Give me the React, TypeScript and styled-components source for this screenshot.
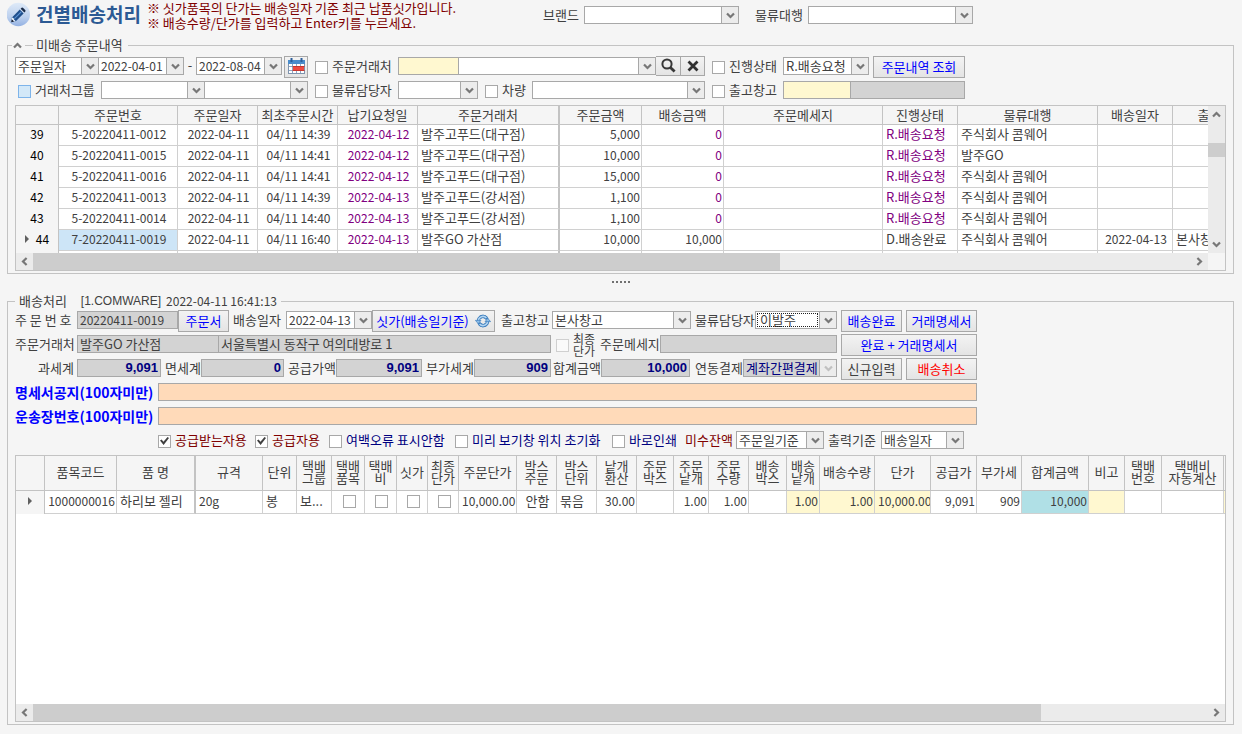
import React from 'react';
import styled, { createGlobalStyle, css } from 'styled-components';

const KR = '"Noto Sans CJK KR", sans-serif';
const LATIN = '"Liberation Sans", "Noto Sans CJK KR", sans-serif';

const color = {
  page: '#f5f5f5',
  text: '#404040',
  line: '#c3c3c3',
  cellLine: '#d0d0d0',
  field: '#a8a8a8',
  grey: '#d3d3d3',
  yellow: '#fff8d0',
  peach: '#ffdab9',
  blue: '#0000ff',
  navy: '#000080',
  maroon: '#800000',
  purple: '#800080',
  red: '#ff0000',
};

const GlobalStyle = createGlobalStyle`
  *, *::before, *::after { box-sizing: border-box; }
  body {
    margin: 0;
    background: ${color.page};
    color: ${color.text};
    font: 13px/16px ${KR};
  }
  button, input, select { font: inherit; color: inherit; margin: 0; }
`;

const Page = styled.main`
  display: flex;
  flex-direction: column;
  min-height: 100vh;
  padding: 0 8px 9px 7px;
`;

const Header = styled.header`
  display: flex;
  align-items: flex-start;
  height: 37px;
  white-space: nowrap;
`;

const TitleBlock = styled.div`
  display: flex;
  width: 536px;
`;

const Title = styled.h1`
  margin: 0 6px 0 5px;
  font-size: 19px;
  line-height: 28px;
  font-weight: 700;
  color: #2c5a94;
`;

const Notes = styled.p`
  margin: 0;
  line-height: 15px;
  color: ${color.maroon};
`;

const HeaderFields = styled.div`
  display: flex;
  align-items: flex-start;
  padding-top: 5px;
`;

const Group = styled.fieldset<{ $fill?: boolean }>`
  min-width: 0;
  margin: 0;
  padding: ${p => (p.$fill ? 1 : 3)}px 7px 2px;
  border: 1px solid ${color.line};
`;

const Legend = styled.legend`
  display: flex;
  align-items: center;
  height: 16px;
  padding: 0 4px;
  line-height: 14px;
  white-space: nowrap;
`;

const FoldLegend = styled(Legend)`
  margin-left: -3px;
  padding: 0 5px 0 1px;
`;

const FoldButton = styled.button`
  display: flex;
  padding: 0;
  border: 0;
  background: none;
`;

const LegendRule = styled.span`
  width: 8px;
  height: 1px;
  margin: 0 3px 0 3px;
  background: ${color.line};
`;

const Digits = styled.span`
  margin-left: 5px;
  font-size: 12px;
`;

const Company = styled.span`
  margin-left: 14px;
  font-family: ${LATIN};
  font-size: 12px;
`;

const Row = styled.div`
  display: flex;
  align-items: flex-start;
  height: 24px;
  white-space: nowrap;
`;

const Label = styled.label<{ $w: number; $color?: string; $end?: boolean }>`
  flex: none;
  width: ${p => p.$w}px;
  line-height: 20px;
  color: ${p => p.$color || 'inherit'};
  text-align: ${p => (p.$end ? 'right' : 'left')};
  padding-right: ${p => (p.$end ? 3 : 0)}px;
`;

const NoticeLabel = styled(Label)`
  font-size: 14px;
  font-weight: 700;
`;

const Tick = styled.label<{ $w: number; $color?: string }>`
  display: flex;
  align-items: center;
  flex: none;
  gap: 4px;
  width: ${p => p.$w}px;
  height: 22px;
  line-height: 18px;
  color: ${p => p.$color || 'inherit'};
`;

const TickText = styled.span`
  padding-bottom: 2px;
`;

const StackedText = styled.span`
  font-size: 12px;
  line-height: 12px;
`;

const Box = styled.input.attrs({ type: 'checkbox' })<{ $blue?: boolean }>`
  appearance: none;
  display: grid;
  place-items: center;
  flex: none;
  width: 13px;
  height: 13px;
  border: 1px solid ${p => (p.$blue ? '#7eb4ea' : color.field)};
  background: ${p => (p.$blue ? '#d3e8f8' : '#fff')};
  &:disabled { border-color: #d0d0d0; background: #fafafa; }
  &:checked::after {
    content: '';
    width: 9px;
    height: 8px;
    background: #404040;
    clip-path: polygon(0 45%, 18% 32%, 38% 58%, 84% 0, 100% 14%, 40% 100%);
  }
`;

const fieldBox = css<{ $w: number; $join?: boolean; $bg?: string }>`
  flex: none;
  width: ${p => p.$w}px;
  height: 18px;
  margin-top: 1px;
  border: 1px solid ${color.field};
  background: ${p => p.$bg || '#fff'};
  ${p => p.$join && css`border-left: 0;`}
`;

const TextField = styled.input.attrs({ type: 'text' })<{
  $w: number; $join?: boolean; $bg?: string; $digits?: boolean; $total?: boolean;
}>`
  ${fieldBox}
  padding: 0 2px 2px;
  outline: 0;
  ${p => p.$digits && css`font-size: 12px;`}
  ${p => p.$total && css`
    font-family: ${LATIN};
    font-weight: 700;
    text-align: right;
    color: ${color.navy};
  `}
`;

const ComboBox = styled.div<{ $w: number; $join?: boolean; $bg?: string }>`
  ${fieldBox}
  display: grid;
  grid-template-columns: minmax(0, 1fr) 17px;
`;

const ComboSelect = styled.select<{ $color?: string; $inset?: boolean }>`
  appearance: none;
  grid-area: 1 / 1 / 2 / 3;
  height: 16px;
  padding: 0 18px 1px ${p => (p.$inset ? 4 : 2)}px;
  border: 0;
  outline: 0;
  border-radius: 0;
  background: none;
  line-height: 15px;
  color: ${p => p.$color || 'inherit'};
  opacity: 1;
`;

const ComboInput = styled.input.attrs({ type: 'text' })`
  grid-area: 1 / 1;
  min-width: 0;
  height: 16px;
  padding: 0 0 1px 2px;
  border: 0;
  outline: 0;
  background: none;
  font-size: 12px;
`;

const arrowBox = css`
  grid-area: 1 / 2;
  display: flex;
  align-items: center;
  justify-content: center;
  height: 16px;
  padding: 0;
  border: 0;
  border-left: 1px solid ${color.field};
  background: #ececec;
`;

const ArrowFace = styled.span`
  ${arrowBox}
  pointer-events: none;
`;

const ArrowButton = styled.button`
  ${arrowBox}
`;

const FocusFrame = styled.span`
  grid-area: 1 / 1;
  margin: 1px;
  border: 1px dotted #202020;
  pointer-events: none;
`;

const Button = styled.button<{ $w: number; $color?: string; $short?: boolean; $join?: boolean }>`
  display: flex;
  align-items: center;
  justify-content: center;
  flex: none;
  gap: 6px;
  width: ${p => p.$w}px;
  height: ${p => (p.$short ? 20 : 22)}px;
  padding: 0 0 1px;
  border: 1px solid ${color.field};
  background: linear-gradient(#f3f3f3, #e4e4e4);
  color: ${p => p.$color || 'inherit'};
  white-space: nowrap;
  ${p => p.$join && css`border-left: 0;`}
`;

const Gap = styled.span<{ $w: number }>`
  flex: none;
  width: ${p => p.$w}px;
  line-height: 18px;
  text-align: center;
`;

const GridFrame = styled.div<{ $fill?: boolean }>`
  display: grid;
  grid-template-columns: minmax(0, 1fr) auto;
  grid-template-rows: ${p => (p.$fill ? 'max(120px, calc(100vh - 486px))' : '147px')} 17px;
  margin-top: 1px;
  border: 1px solid ${color.line};
  background: ${p => (p.$fill ? '#fff' : color.page)};
`;

const Viewport = styled.div<{ $whole?: boolean }>`
  overflow: hidden;
  ${p => p.$whole && css`grid-column: 1 / 3;`}
`;

const Table = styled.table<{ $w: number }>`
  width: ${p => p.$w}px;
  table-layout: fixed;
  border-collapse: separate;
  border-spacing: 0;
  white-space: nowrap;
`;

const Th = styled.th<{ $h: number; $frozen?: boolean }>`
  height: ${p => p.$h}px;
  padding: 0 0 ${p => (p.$h > 20 ? 2 : 1)}px;
  border: solid ${color.line};
  border-width: 0 ${p => (p.$frozen ? 2 : 1)}px 1px 0;
  background: ${color.page};
  font-weight: 400;
  line-height: ${p => (p.$h > 20 ? 12 : 16)}px;
  white-space: pre;
`;

type CellKind = { $h: number; $align?: string; $num?: boolean; $frozen?: boolean; $bg?: string; $color?: string };

const Td = styled.td<CellKind>`
  height: ${p => p.$h}px;
  padding: 0 1px 2px 3px;
  overflow: hidden;
  border: solid ${color.cellLine};
  border-width: 0 ${p => (p.$frozen ? 2 : 1)}px 1px 0;
  ${p => p.$frozen && css`border-right-color: ${color.line};`}
  background: ${p => p.$bg || '#fff'};
  color: ${p => p.$color || 'inherit'};
  text-align: ${p => p.$align || 'left'};
  ${p => p.$num && css`font-size: 12px;`}
`;

const RowHead = styled.th<{ $h: number }>`
  height: ${p => p.$h}px;
  padding: 0 0 3px;
  border-right: 1px solid ${color.line};
  background: ${color.page};
  color: #000;
  font: 12px/16px ${KR};
`;

const RowMark = styled.span`
  display: flex;
  align-items: center;
  justify-content: center;
  gap: 7px;
`;

const CellTick = styled(Box)`
  margin: 1px auto 0;
`;

const HBar = styled.div<{ $whole?: boolean }>`
  display: flex;
  ${p => p.$whole && css`grid-column: 1 / 3;`}
  background: #ebebeb;
`;

const VBar = styled.div`
  display: flex;
  flex-direction: column;
  width: 17px;
  background: #ebebeb;
`;

const Corner = styled.div`
  background: ${color.page};
`;

const Track = styled.div<{ $vertical?: boolean }>`
  display: flex;
  flex: 1;
  flex-direction: ${p => (p.$vertical ? 'column' : 'row')};
  min-height: 0;
`;

const Thumb = styled.div<{ $size: number }>`
  flex: 0 0 ${p => p.$size}%;
  background: #cdcdcd;
`;

const TrackLead = styled.div<{ $size: number }>`
  flex: 0 0 ${p => p.$size}%;
`;

const ScrollButton = styled.button`
  display: flex;
  align-items: center;
  justify-content: center;
  flex: none;
  width: 17px;
  height: 17px;
  padding: 0;
  border: 0;
  background: none;
`;

const Splitter = styled.div`
  display: flex;
  justify-content: center;
  gap: 2px;
  height: 19px;
  padding-top: 7px;
`;

const Dot = styled.span`
  width: 2px;
  height: 2px;
  background: #707070;
`;

const turns = { down: 0, left: 90, up: 180, right: 270 };

function Chevron({ dir = 'down', pale }: { dir?: keyof typeof turns; pale?: boolean }) {
  return (
    <svg width="9" height="9" viewBox="0 0 9 9" aria-hidden="true">
      <path
        d="M1 2.4 L4.5 6 L8 2.4"
        fill="none"
        stroke={pale ? '#c0c0c0' : '#777'}
        strokeWidth="2.2"
        transform={`rotate(${turns[dir]} 4.5 4.5)`}
      />
    </svg>
  );
}

function RowArrow() {
  return (
    <svg width="4" height="8" viewBox="0 0 4 8" aria-hidden="true">
      <path d="M0 0 L4 4 L0 8 Z" fill="#606060" />
    </svg>
  );
}

function PencilBadge() {
  return (
    <svg width="24" height="27" viewBox="0 0 24 27" aria-hidden="true">
      <defs>
        <linearGradient id="badge" x1="0" y1="0" x2="0" y2="1">
          <stop offset="0" stopColor="#dfeaf8" />
          <stop offset="0.6" stopColor="#bcd0ee" />
          <stop offset="1" stopColor="#93b1e2" />
        </linearGradient>
      </defs>
      <circle cx="11.3" cy="14.5" r="11.7" fill="url(#badge)" />
      <path d="M4.2 22.2 L5 17.4 L12.8 9.6 L16.6 13.4 L8.8 21.2 Z" fill="#1f4f8c" />
      <path d="M13.6 8.8 L14.6 7.8 Q15.4 7.2 16.2 7.9 L18.2 9.9 Q18.9 10.8 18.3 11.6 L17.4 12.6 Z" fill="#1a2b48" />
      <path d="M7.4 18.6 L14.2 11.8" stroke="#5d93d4" strokeWidth="1.2" />
      <path d="M4.2 22.2 L5 17.4 L6.5 18 L7.1 19.5 L8.8 21.2 Z" fill="#eef4fc" />
      <path d="M4.2 22.2 L4.8 19.2 L7.2 21.6 Z" fill="#101c30" />
    </svg>
  );
}

function CalendarIcon() {
  return (
    <svg width="17" height="17" viewBox="0 0 17 17" aria-hidden="true">
      <rect x="0.5" y="2.5" width="16" height="13" fill="#fff" stroke="#7f93ad" />
      <rect x="0" y="2" width="17" height="4" fill="#4a8ccb" />
      <path d="M3.5 0 V4 M13.5 0 V4" stroke="#2c5f9c" strokeWidth="2" />
      <path d="M1 8.5 H16 M1 12.5 H16 M4.5 6 V15 M8.5 6 V15 M12.5 6 V15" stroke="#8ea6c4" />
      <rect x="5" y="9" width="11" height="3" fill="#ee4a40" />
      <path d="M4.5 8.5 H16.5 M4.5 12.5 H16.5" stroke="#c8362e" />
    </svg>
  );
}

function SearchIcon() {
  return (
    <svg width="15" height="15" viewBox="0 0 15 15" aria-hidden="true">
      <circle cx="6" cy="6" r="4.6" fill="none" stroke="#383838" strokeWidth="2" />
      <path d="M9.4 9.4 L13.6 13.6" stroke="#383838" strokeWidth="2.8" />
    </svg>
  );
}

function CloseIcon() {
  return (
    <svg width="12" height="12" viewBox="0 0 12 12" aria-hidden="true">
      <path d="M1.5 1.5 L10.5 10.5 M10.5 1.5 L1.5 10.5" stroke="#303030" strokeWidth="2.8" />
    </svg>
  );
}

function RefreshIcon() {
  return (
    <svg width="16" height="14" viewBox="0 0 16 14" aria-hidden="true">
      <g fill="none" stroke="#3f7fbe" strokeWidth="3.2">
        <path d="M3.4 7.6 A4.6 4.6 0 0 1 11.4 4" />
        <path d="M12.6 6.4 A4.6 4.6 0 0 1 4.6 10" />
        <path d="M5 3.4 A4.8 4.8 0 0 1 12.2 5.2 M11 10.6 A4.8 4.8 0 0 1 3.8 8.8" />
      </g>
      <g fill="none" stroke="#b4d6f2" strokeWidth="1.6">
        <path d="M3.4 7.6 A4.6 4.6 0 0 1 11.4 4" />
        <path d="M12.6 6.4 A4.6 4.6 0 0 1 4.6 10" />
      </g>
      <path d="M0.4 6.4 H6 L3.2 9.6 Z M10 7.6 H15.6 L12.8 4.4 Z" fill="#8fc0ea" stroke="#3f7fbe" strokeWidth="0.7" />
    </svg>
  );
}

type SelectProps = {
  label: string; w: number; id?: string; value?: string; join?: boolean;
  bg?: string; tone?: string; disabled?: boolean; focused?: boolean;
};

function Select({ label, w, id, value = '', join, bg, tone, disabled, focused }: SelectProps) {
  return (
    <ComboBox $w={w} $join={join} $bg={bg}>
      <ComboSelect id={id} aria-label={label} defaultValue={value} disabled={disabled} $color={tone} $inset={focused}>
        <option value={value}>{value}</option>
      </ComboSelect>
      {focused && <FocusFrame />}
      <ArrowFace><Chevron pale={disabled} /></ArrowFace>
    </ComboBox>
  );
}

function DateField({ label, w, id, value, join }: SelectProps) {
  return (
    <ComboBox $w={w} $join={join}>
      <ComboInput id={id} aria-label={label} defaultValue={value} />
      <ArrowButton type="button" aria-label={`${label} 선택`}><Chevron /></ArrowButton>
    </ComboBox>
  );
}

type CheckProps = { text: string; w: number; tone?: string; blue?: boolean; on?: boolean };

function Check({ text, w, tone, blue, on }: CheckProps) {
  return (
    <Tick $w={w} $color={tone}>
      <Box $blue={blue} defaultChecked={on} />
      <TickText>{text}</TickText>
    </Tick>
  );
}

type Column = { title: string; w: number; align?: string; num?: boolean; color?: string; bg?: string; frozen?: boolean };

const orderColumns: Column[] = [
  { title: '주문번호', w: 119, align: 'center', num: true },
  { title: '주문일자', w: 80, align: 'center', num: true },
  { title: '최초주문시간', w: 80, align: 'center', num: true },
  { title: '납기요청일', w: 80, align: 'center', num: true, color: color.purple },
  { title: '주문거래처', w: 142, frozen: true },
  { title: '주문금액', w: 82, align: 'right', num: true },
  { title: '배송금액', w: 82, align: 'right', num: true },
  { title: '주문메세지', w: 159 },
  { title: '진행상태', w: 75 },
  { title: '물류대행', w: 140 },
  { title: '배송일자', w: 75, align: 'center', num: true },
  { title: '출고창고', w: 98 },
];

const orders: string[][] = [
  ['39', '5-20220411-0012', '2022-04-11', '04/11 14:39', '2022-04-12', '발주고푸드(대구점)', '5,000', '0', '', 'R.배송요청', '주식회사 콤웨어', '', ''],
  ['40', '5-20220411-0015', '2022-04-11', '04/11 14:41', '2022-04-12', '발주고푸드(대구점)', '10,000', '0', '', 'R.배송요청', '발주GO', '', ''],
  ['41', '5-20220411-0016', '2022-04-11', '04/11 14:41', '2022-04-12', '발주고푸드(대구점)', '15,000', '0', '', 'R.배송요청', '주식회사 콤웨어', '', ''],
  ['42', '5-20220411-0013', '2022-04-11', '04/11 14:39', '2022-04-13', '발주고푸드(강서점)', '1,100', '0', '', 'R.배송요청', '주식회사 콤웨어', '', ''],
  ['43', '5-20220411-0014', '2022-04-11', '04/11 14:40', '2022-04-13', '발주고푸드(강서점)', '1,100', '0', '', 'R.배송요청', '주식회사 콤웨어', '', ''],
  ['44', '7-20220411-0019', '2022-04-11', '04/11 16:40', '2022-04-13', '발주GO 가산점', '10,000', '10,000', '', 'D.배송완료', '주식회사 콤웨어', '2022-04-13', '본사창고'],
  ['', '', '', '', '', '', '', '', '', '', '', '', ''],
];

const itemColumns: (Column & { value: string | boolean })[] = [
  { title: '품목코드', w: 72, num: true, align: 'center', value: '1000000016' },
  { title: '품 명', w: 79, frozen: true, value: '하리보 젤리' },
  { title: '규격', w: 67, num: true, value: '20g' },
  { title: '단위', w: 34, value: '봉' },
  { title: '택배\n그룹', w: 35, value: '보...' },
  { title: '택배\n품목', w: 33, value: false },
  { title: '택배\n비', w: 32, value: false },
  { title: '싯가', w: 31, value: false },
  { title: '최종\n단가', w: 31, value: false },
  { title: '주문단가', w: 58, num: true, align: 'right', value: '10,000.00' },
  { title: '박스\n주문', w: 40, align: 'center', value: '안함' },
  { title: '박스\n단위', w: 40, value: '묶음' },
  { title: '낱개\n환산', w: 40, num: true, align: 'right', value: '30.00' },
  { title: '주문\n박스', w: 37, value: '' },
  { title: '주문\n낱개', w: 35, num: true, align: 'right', value: '1.00' },
  { title: '주문\n수량', w: 40, num: true, align: 'right', value: '1.00' },
  { title: '배송\n박스', w: 38, value: '' },
  { title: '배송\n낱개', w: 33, num: true, align: 'right', bg: color.yellow, value: '1.00' },
  { title: '배송수량', w: 55, num: true, align: 'right', bg: color.yellow, value: '1.00' },
  { title: '단가', w: 56, num: true, align: 'right', bg: color.yellow, value: '10,000.00' },
  { title: '공급가', w: 46, num: true, align: 'right', value: '9,091' },
  { title: '부가세', w: 45, num: true, align: 'right', value: '909' },
  { title: '합계금액', w: 67, num: true, align: 'right', bg: '#b0e0e6', value: '10,000' },
  { title: '비고', w: 36, bg: color.yellow, value: '' },
  { title: '택배\n번호', w: 37, value: '' },
  { title: '택배비\n자동계산', w: 62, value: '' },
  { title: '', w: 60, bg: color.yellow, value: '' },
];

const sum = (cols: Column[]) => cols.reduce((n, c) => n + c.w, 0);

function OrderTable() {
  return (
    <Table $w={sum(orderColumns) + 43}>
      <colgroup>
        <col width={43} />
        {orderColumns.map(c => <col key={c.title} width={c.w} />)}
      </colgroup>
      <thead>
        <tr>
          <Th $h={19} aria-label="순번" />
          {orderColumns.map(c => <Th key={c.title} $h={19} $frozen={c.frozen}>{c.title}</Th>)}
        </tr>
      </thead>
      <tbody>
        {orders.map(([no, ...cells]) => {
          const current = no === '44';
          return (
            <tr key={no}>
              <RowHead $h={21} scope="row"><RowMark>{current && <RowArrow />}{no}</RowMark></RowHead>
              {cells.map((text, i) => {
                const c = orderColumns[i];
                const pending = !current && (i === 6 || i === 8);
                return (
                  <Td
                    key={c.title}
                    $h={21}
                    $align={c.align}
                    $num={c.num}
                    $frozen={c.frozen}
                    $color={pending ? color.purple : c.color}
                    $bg={current && i === 0 ? '#cde5f7' : undefined}
                  >
                    {text}
                  </Td>
                );
              })}
            </tr>
          );
        })}
      </tbody>
    </Table>
  );
}

function ItemTable() {
  return (
    <Table $w={sum(itemColumns) + 29}>
      <colgroup>
        <col width={29} />
        {itemColumns.map(c => <col key={c.title} width={c.w} />)}
      </colgroup>
      <thead>
        <tr>
          <Th $h={35} aria-label="선택" />
          {itemColumns.map(c => <Th key={c.title} $h={35} $frozen={c.frozen}>{c.title}</Th>)}
        </tr>
      </thead>
      <tbody>
        <tr>
          <RowHead $h={23} scope="row"><RowMark><RowArrow /></RowMark></RowHead>
          {itemColumns.map(c => (
            <Td key={c.title} $h={23} $align={c.align} $num={c.num} $frozen={c.frozen} $bg={c.bg}>
              {c.value === false ? <CellTick aria-label={c.title} /> : c.value}
            </Td>
          ))}
        </tr>
      </tbody>
    </Table>
  );
}

function HScroll({ size, whole }: { size: number; whole?: boolean }) {
  return (
    <HBar $whole={whole}>
      <ScrollButton type="button" aria-label="왼쪽으로"><Chevron dir="left" /></ScrollButton>
      <Track><Thumb $size={size} /></Track>
      <ScrollButton type="button" aria-label="오른쪽으로"><Chevron dir="right" /></ScrollButton>
    </HBar>
  );
}

function SearchPanel() {
  return (
    <Group>
      <FoldLegend>
        <FoldButton type="button" aria-label="접기"><Chevron dir="up" /></FoldButton>
        <LegendRule />
        미배송 주문내역
      </FoldLegend>
      <Row>
        <Select label="일자 구분" w={84} value="주문일자" />
        <DateField label="시작일" w={85} value="2022-04-01" join />
        <Gap $w={12}>-</Gap>
        <DateField label="종료일" w={86} value="2022-08-04" />
        <Gap $w={2} />
        <Button type="button" $w={24} aria-label="달력"><CalendarIcon /></Button>
        <Gap $w={7} />
        <Check w={83} text="주문거래처" />
        <TextField $w={61} $bg={color.yellow} aria-label="거래처 코드" />
        <Select label="거래처명" w={197} join />
        <Button type="button" $w={25} $short $join aria-label="검색"><SearchIcon /></Button>
        <Button type="button" $w={24} $short $join aria-label="지우기"><CloseIcon /></Button>
        <Gap $w={7} />
        <Check w={71} text="진행상태" />
        <Select label="진행상태 값" w={86} value="R.배송요청" />
        <Gap $w={4} />
        <Button type="button" $w={92} $color={color.blue}>주문내역 조회</Button>
      </Row>
      <Row>
        <Gap $w={3} />
        <Check w={83} text="거래처그룹" blue />
        <Select label="거래처그룹 대분류" w={104} />
        <Select label="거래처그룹 소분류" w={103} join />
        <Gap $w={7} />
        <Check w={83} text="물류담당자" />
        <Select label="물류담당자 값" w={80} />
        <Gap $w={7} />
        <Check w={47} text="차량" />
        <Select label="차량 값" w={173} />
        <Gap $w={7} />
        <Check w={71} text="출고창고" />
        <TextField $w={68} $bg={color.yellow} aria-label="출고창고 코드" />
        <TextField $w={114} $join $bg={color.grey} readOnly aria-label="출고창고명" />
      </Row>
      <GridFrame>
        <Viewport><OrderTable /></Viewport>
        <VBar>
          <ScrollButton type="button" aria-label="위로"><Chevron dir="up" /></ScrollButton>
          <Track $vertical><TrackLead $size={18} /><Thumb $size={12} /></Track>
          <ScrollButton type="button" aria-label="아래로"><Chevron /></ScrollButton>
        </VBar>
        <HScroll size={64.5} />
        <Corner />
      </GridFrame>
    </Group>
  );
}

function DeliveryPanel() {
  return (
    <Group $fill>
      <Legend>
        배송처리
        <Company>[1.COMWARE]</Company>
        <Digits>2022-04-11 16:41:13</Digits>
      </Legend>
      <Row>
        <Label $w={62} htmlFor="orderNo">주 문 번 호</Label>
        <TextField id="orderNo" $w={101} $digits $bg={color.grey} readOnly defaultValue="20220411-0019" />
        <Button type="button" $w={51} $color={color.blue}>주문서</Button>
        <Gap $w={4} />
        <Label $w={53} htmlFor="shipDate">배송일자</Label>
        <DateField id="shipDate" label="배송일자" w={86} value="2022-04-13" />
        <Button type="button" $w={123} $color={color.blue}>싯가(배송일기준)<RefreshIcon /></Button>
        <Gap $w={6} />
        <Label $w={51} htmlFor="depot">출고창고</Label>
        <Select id="depot" label="출고창고" w={139} value="본사창고" />
        <Gap $w={4} />
        <Label $w={60} htmlFor="manager">물류담당자</Label>
        <Select id="manager" label="물류담당자" w={82} value="이발주" focused />
        <Gap $w={4} />
        <Button type="button" $w={61} $color={color.blue}>배송완료</Button>
        <Gap $w={4} />
        <Button type="button" $w={71} $color={color.blue}>거래명세서</Button>
      </Row>
      <Row>
        <Label $w={62} htmlFor="client">주문거래처</Label>
        <TextField id="client" $w={142} $bg={color.grey} readOnly defaultValue="발주GO 가산점" />
        <TextField $w={332} $join $bg={color.grey} readOnly aria-label="주소" defaultValue="서울특별시 동작구 여의대방로 1" />
        <Gap $w={5} />
        <Tick $w={44}><Box disabled /><StackedText>최종<br />단가</StackedText></Tick>
        <Label $w={60} htmlFor="message">주문메세지</Label>
        <TextField id="message" $w={177} $bg={color.grey} readOnly />
        <Gap $w={4} />
        <Button type="button" $w={136} $color={color.blue}>완료 + 거래명세서</Button>
      </Row>
      <Row>
        <Label $w={62} $end htmlFor="taxable">과세계</Label>
        <TextField id="taxable" $w={84} $total $bg={color.grey} readOnly defaultValue="9,091" />
        <Gap $w={4} />
        <Label $w={36} htmlFor="exempt">면세계</Label>
        <TextField id="exempt" $w={83} $total $bg={color.grey} readOnly defaultValue="0" />
        <Gap $w={4} />
        <Label $w={48} htmlFor="supply">공급가액</Label>
        <TextField id="supply" $w={86} $total $bg={color.grey} readOnly defaultValue="9,091" />
        <Gap $w={4} />
        <Label $w={48} htmlFor="vat">부가세계</Label>
        <TextField id="vat" $w={77} $total $bg={color.grey} readOnly defaultValue="909" />
        <Gap $w={2} />
        <Label $w={48} htmlFor="total">합계금액</Label>
        <TextField id="total" $w={89} $total $bg={color.grey} readOnly defaultValue="10,000" />
        <Gap $w={5} />
        <Label $w={48} htmlFor="payment">연동결제</Label>
        <Select id="payment" label="연동결제" w={94} value="계좌간편결제" bg={color.grey} tone={color.navy} disabled />
        <Gap $w={4} />
        <Button type="button" $w={61}>신규입력</Button>
        <Gap $w={4} />
        <Button type="button" $w={71} $color={color.red}>배송취소</Button>
      </Row>
      <Row>
        <NoticeLabel $w={143} $color={color.blue} htmlFor="notice">명세서공지(100자미만)</NoticeLabel>
        <TextField id="notice" $w={819} $bg={color.peach} />
      </Row>
      <Row>
        <NoticeLabel $w={143} $color={color.blue} htmlFor="waybill">운송장번호(100자미만)</NoticeLabel>
        <TextField id="waybill" $w={819} $bg={color.peach} />
      </Row>
      <Row>
        <Gap $w={143} />
        <Check w={97} tone={color.maroon} text="공급받는자용" on />
        <Check w={74} tone={color.maroon} text="공급자용" on />
        <Check w={126} tone={color.navy} text="여백오류 표시안함" />
        <Check w={157} tone={color.navy} text="미리 보기창 위치 초기화" />
        <Check w={73} tone={color.navy} text="바로인쇄" />
        <Label $w={51} $color={color.maroon} htmlFor="balance">미수잔액</Label>
        <Select id="balance" label="미수잔액" w={88} value="주문일기준" />
        <Gap $w={4} />
        <Label $w={53} htmlFor="printBy">출력기준</Label>
        <Select id="printBy" label="출력기준" w={83} value="배송일자" />
      </Row>
      <GridFrame $fill>
        <Viewport $whole><ItemTable /></Viewport>
        <HScroll size={85.8} whole />
      </GridFrame>
    </Group>
  );
}

export default function App() {
  return (
    <Page>
      <GlobalStyle />
      <Header>
        <TitleBlock>
          <PencilBadge />
          <Title>건별배송처리</Title>
          <Notes>
            ※ 싯가품목의 단가는 배송일자 기준 최근 납품싯가입니다.<br />
            ※ 배송수량/단가를 입력하고 Enter키를 누르세요.
          </Notes>
        </TitleBlock>
        <HeaderFields>
          <Label $w={41} htmlFor="brand">브랜드</Label>
          <Select id="brand" label="브랜드" w={155} />
          <Gap $w={16} />
          <Label $w={53} htmlFor="agency">물류대행</Label>
          <Select id="agency" label="물류대행" w={165} />
        </HeaderFields>
      </Header>
      <SearchPanel />
      <Splitter>{[0, 1, 2, 3, 4].map(n => <Dot key={n} />)}</Splitter>
      <DeliveryPanel />
    </Page>
  );
}
